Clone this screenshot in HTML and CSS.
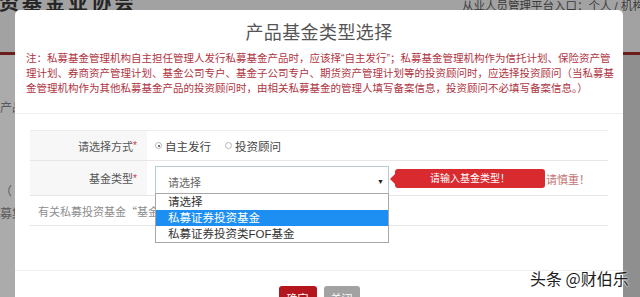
FILE: index.html
```html
<!DOCTYPE html>
<html lang="zh-CN">
<head>
<meta charset="utf-8">
<title>产品基金类型选择</title>
<link rel="stylesheet" href="styles.css">
</head>
<body>
<div class="page">
  <header class="site-head">
    <div class="logo">资基金业协会</div>
    <div class="entry">从业人员管理平台入口：个人 / 机构</div>
  </header>
  <div class="red-bar"></div>
  <div class="page-body">
    <div class="side">
      <div class="side-item side-a">产品备案</div>
      <div class="side-item side-b">（</div>
      <div class="side-item side-c">募集</div>
    </div>
    <div class="main-area"></div>
  </div>
</div>

<div class="modal">
  <h2 class="modal-title">产品基金类型选择</h2>
  <div class="note">
    <span class="note-line">注：私募基金管理机构自主担任管理人发行私募基金产品时，应该择“自主发行”；私募基金管理机构作为信托计划、保险资产管</span>
    <span class="note-line">理计划、券商资产管理计划、基金公司专户、基金子公司专户、期货资产管理计划等的投资顾问时，应选择投资顾问（当私募基</span>
    <span class="note-line">金管理机构作为其他私募基金产品的投资顾问时，由相关私募基金的管理人填写备案信息，投资顾问不必填写备案信息。）</span>
  </div>
  <div class="form">
    <div class="row row-1">
      <div class="label">请选择方式<span class="req">*</span></div>
      <div class="value">
        <label class="radio"><span class="dot checked"></span>自主发行</label>
        <label class="radio"><span class="dot"></span>投资顾问</label>
      </div>
    </div>
    <div class="row row-2">
      <div class="label">基金类型<span class="req">*</span></div>
      <div class="value">
        <div class="select-wrap">
          <div class="select"><span>请选择</span><span class="arrow">▼</span></div>
          <ul class="dropdown">
            <li class="opt">请选择</li>
            <li class="opt active">私募证券投资基金</li>
            <li class="opt">私募证券投资类FOF基金</li>
          </ul>
          <div class="tip">请输入基金类型！</div>
        </div>
        <span class="hint">产品类型一经选择不可修改，请慎重！</span>
      </div>
    </div>
    <div class="row row-3">
      <div class="full">有关私募投资基金“基金类型”的说明</div>
    </div>
  </div>
  <div class="footer">
    <button class="btn btn-ok">确定</button>
    <button class="btn btn-close">关闭</button>
  </div>
</div>

<div class="watermark">头条 @财伯乐</div>
</body>
</html>
```

FILE: styles.css
```css
* { box-sizing: border-box; }

html, body {
  margin: 0;
  padding: 0;
}

body {
  width: 640px;
  height: 297px;
  overflow: hidden;
  position: relative;
  background: #979797;
  font-family: "Liberation Sans", "Noto Sans CJK SC", sans-serif;
}

/* underlying page (dimmed) */
.page {
  display: flex;
  flex-direction: column;
  height: 297px;
}

.site-head {
  height: 52px;
  display: flex;
  justify-content: space-between;
  background: #a2a2a2;
  overflow: hidden;
}

.logo {
  font-family: "Noto Sans CJK SC", sans-serif;
  font-weight: 700;
  font-size: 20px;
  line-height: 20px;
  letter-spacing: 3px;
  margin-top: -8px;
  margin-left: -1px;
  color: #262626;
}

.entry {
  font-size: 11.5px;
  line-height: 12px;
  color: #3a3a3a;
  margin-top: 0;
  margin-right: -4px;
  white-space: nowrap;
}

.red-bar {
  height: 3px;
  background: #6e1d1d;
}

.page-body {
  flex: 1;
  display: flex;
}

.side {
  width: 160px;
  background: #ababab;
  display: flex;
  flex-direction: column;
}

.side-item {
  font-size: 12px;
  color: #5a5a5a;
  line-height: 14px;
}

.side-a { margin-top: 46px; }
.side-b { margin-top: 70px; }
.side-c { margin-top: 8px; }

.main-area {
  flex: 1;
  background: #8f8f8f;
}

/* modal */
.modal {
  position: absolute;
  top: 10px;
  left: 15px;
  width: 608px;
  height: 300px;
  background: #fff;
  border-radius: 5px;
  display: flex;
  flex-direction: column;
}

.modal-title {
  margin: 0;
  height: 41px;
  line-height: 43px;
  text-align: center;
  font-family: "Noto Sans CJK SC", sans-serif;
  font-weight: 400;
  font-size: 18px;
  letter-spacing: 0.4px;
  color: #555;
}

.note {
  padding: 0 0 17px 11px;
  border-bottom: 1px solid #eeeeee;
  display: flex;
  flex-direction: column;
}

.note-line {
  font-size: 10.5px;
  line-height: 15px;
  color: #b0343f;
  white-space: nowrap;
}

.form {
  margin: 16px 15px 0;
  display: flex;
  flex-direction: column;
  border-top: 1px solid #ececec;
}

.row {
  display: flex;
  border-bottom: 1px solid #e6e6e6;
}

.row-1 { height: 30px; }
.row-2 { height: 35px; }
.row-3 { height: 30px; }

.label {
  width: 117px;
  background: #f7f7f7;
  text-align: right;
  padding-right: 10px;
  font-size: 11px;
  color: #555;
  display: flex;
  align-items: center;
  justify-content: flex-end;
}

.req {
  color: #d0343f;
  font-size: 10px;
  align-self: flex-start;
  margin-top: 9px;
}

.row-2 .req { margin-top: 12px; }

.value {
  flex: 1;
  display: flex;
  align-items: center;
  padding-left: 8px;
  font-size: 11.5px;
  color: #444;
}

.radio {
  display: flex;
  align-items: center;
  margin-right: 14px;
}

.dot {
  width: 7px;
  height: 7px;
  border-radius: 50%;
  border: 1px solid #b5b5b5;
  margin-right: 3px;
  position: relative;
}

.dot.checked::after {
  content: "";
  position: absolute;
  left: 1.5px;
  top: 1.5px;
  width: 2px;
  height: 2px;
  border-radius: 50%;
  background: #444;
}

.row-2 .value {
  align-items: flex-start;
  padding-top: 5px;
}

.select-wrap {
  position: relative;
  width: 234px;
  height: 30px;
}

.select {
  height: 30px;
  border: 1px solid #b9cbd3;
  border-bottom: none;
  display: flex;
  align-items: center;
  justify-content: space-between;
  padding: 0 4px 0 12px;
  font-size: 11px;
  color: #666;
}

.arrow {
  font-size: 7px;
  color: #222;
}

.dropdown {
  position: absolute;
  top: 27px;
  left: 0;
  width: 234px;
  margin: 0;
  padding: 0;
  list-style: none;
  background: #fff;
  border: 1px solid #a7a7a7;
  z-index: 2;
}

.opt {
  height: 16px;
  line-height: 16px;
  padding-left: 12px;
  font-size: 11.5px;
  color: #333;
  white-space: nowrap;
}

.opt.active {
  background: #1e8ff2;
  color: #fff;
}

.tip {
  position: absolute;
  left: 240px;
  top: 3px;
  width: 150px;
  height: 19px;
  background: #d92a2f;
  border-radius: 3px;
  color: #fff;
  font-size: 10px;
  line-height: 19px;
  text-align: center;
  z-index: 3;
}

.tip::before {
  content: "";
  position: absolute;
  left: -5px;
  top: 5px;
  border-top: 5px solid transparent;
  border-bottom: 5px solid transparent;
  border-right: 5px solid #d92a2f;
}

.hint {
  margin-left: 14px;
  margin-top: 7px;
  font-size: 11px;
  line-height: 14px;
  color: #c27474;
  white-space: nowrap;
}

.full {
  padding-left: 8px;
  display: flex;
  align-items: center;
  font-family: "Noto Sans CJK SC", sans-serif;
  font-size: 11px;
  color: #8e8e8e;
}

.footer {
  margin-top: 44px;
  border-top: 1px solid #eeeeee;
  padding-top: 15px;
  display: flex;
  justify-content: center;
  gap: 7px;
}

.btn {
  height: 24px;
  border: none;
  border-radius: 3px;
  color: #fff;
  font-family: "Noto Sans CJK SC", sans-serif;
  font-size: 11px;
  padding: 0;
}

.btn-ok {
  width: 38px;
  background: #b3161d;
}

.btn-close {
  width: 36px;
  background: #a2a2a2;
}

.watermark {
  position: absolute;
  left: 530px;
  top: 268px;
  font-family: "Noto Sans CJK SC", sans-serif;
  font-size: 16px;
  line-height: 20px;
  color: #1c1c1c;
  text-shadow: 0 0 2px #fff, 0 0 2px #fff;
  white-space: nowrap;
}
```
